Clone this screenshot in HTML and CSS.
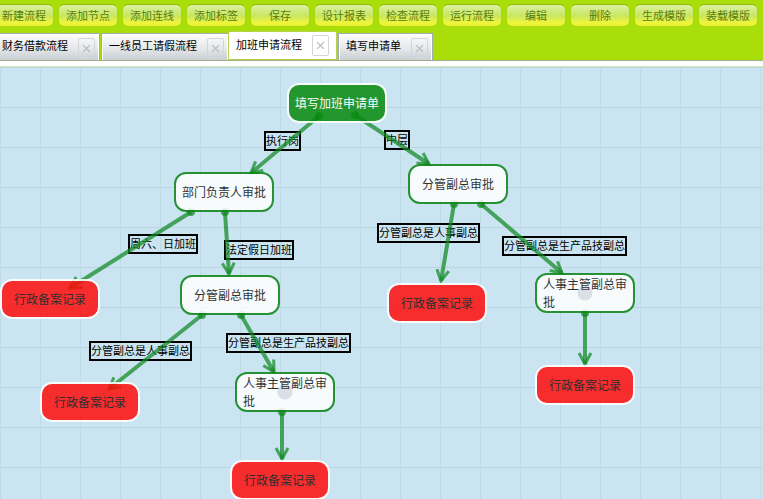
FILE: index.html
```html
<!DOCTYPE html>
<html lang="zh-CN">
<head>
<meta charset="utf-8">
<title>加班申请流程</title>
<link rel="stylesheet" href="styles.css">
</head>
<body>
<header class="top">
  <nav class="toolbar">
    <button class="tool">新建流程</button>
    <button class="tool">添加节点</button>
    <button class="tool">添加连线</button>
    <button class="tool">添加标签</button>
    <button class="tool">保存</button>
    <button class="tool">设计报表</button>
    <button class="tool">检查流程</button>
    <button class="tool">运行流程</button>
    <button class="tool">编辑</button>
    <button class="tool">删除</button>
    <button class="tool">生成模版</button>
    <button class="tool">装载模版</button>
  </nav>
  <div class="tabs">
    <div class="tab"><button class="tab-name">财务借款流程</button><button class="close" aria-label="关闭"><svg viewBox="0 0 8 8"><path d="M1 1l6 6M7 1L1 7"/></svg></button></div>
    <div class="tab"><button class="tab-name">一线员工请假流程</button><button class="close" aria-label="关闭"><svg viewBox="0 0 8 8"><path d="M1 1l6 6M7 1L1 7"/></svg></button></div>
    <div class="tab active"><button class="tab-name">加班申请流程</button><button class="close" aria-label="关闭"><svg viewBox="0 0 8 8"><path d="M1 1l6 6M7 1L1 7"/></svg></button></div>
    <div class="tab"><button class="tab-name">填写申请单</button><button class="close" aria-label="关闭"><svg viewBox="0 0 8 8"><path d="M1 1l6 6M7 1L1 7"/></svg></button></div>
  </div>
</header>
<main class="canvas">
  <div class="label" style="left:264px;top:64px">执行岗</div>
  <div class="label" style="left:384px;top:63px">中层</div>
  <div class="label" style="left:128px;top:167px">周六、日加班</div>
  <div class="label" style="left:224px;top:173px">法定假日加班</div>
  <div class="label" style="left:377px;top:156px">分管副总是人事副总</div>
  <div class="label" style="left:502px;top:169px">分管副总是生产品技副总</div>
  <div class="label" style="left:89px;top:274px">分管副总是人事副总</div>
  <div class="label" style="left:226px;top:266px">分管副总是生产品技副总</div>
  <svg class="edges">
    <defs>
      <marker id="arrow" markerUnits="userSpaceOnUse" markerWidth="20" markerHeight="20" refX="15" refY="10" orient="auto">
        <path d="M4 4L15 10L4 16"/>
      </marker>
      <marker id="dot" markerUnits="userSpaceOnUse" markerWidth="10" markerHeight="10" refX="5" refY="5">
        <circle cx="5" cy="5" r="4"/>
      </marker>
    </defs>
    <path class="edge" d="M319 49L251 106"/>
    <path class="edge" d="M355 48L429 97"/>
    <path class="edge" d="M191 145L70 221"/>
    <path class="edge" d="M225 145L229 207"/>
    <path class="edge" d="M202 248L109 322"/>
    <path class="edge" d="M241 248L274 305"/>
    <path class="edge" d="M282 345L282 392"/>
    <path class="edge" d="M454 137L441 214"/>
    <path class="edge" d="M481 137L562 206"/>
    <path class="edge" d="M585 246L585 297"/>
  </svg>
  <div class="node start" style="left:287px;top:16px">填写加班申请单</div>
  <div class="node" style="left:174px;top:105px">部门负责人审批</div>
  <div class="node" style="left:408px;top:97px">分管副总审批</div>
  <div class="node end" style="left:0px;top:212px">行政备案记录</div>
  <div class="node" style="left:180px;top:208px">分管副总审批</div>
  <div class="node end" style="left:40px;top:315px">行政备案记录</div>
  <div class="node anchor" style="left:235px;top:305px">人事主管副总审批</div>
  <div class="node end" style="left:230px;top:393px">行政备案记录</div>
  <div class="node end" style="left:387px;top:216px">行政备案记录</div>
  <div class="node anchor" style="left:535px;top:206px">人事主管副总审批</div>
  <div class="node end" style="left:535px;top:298px">行政备案记录</div>
</main>
</body>
</html>
```
FILE: styles.css
```css
* {
  box-sizing: border-box;
}

body {
  margin: 0;
  height: 100vh;
  display: flex;
  flex-direction: column;
  overflow: hidden;
  background: #fff;
  color: #000;
  font: 11px/16px "Noto Sans CJK SC", sans-serif;
}

button {
  margin: 0;
  padding: 0;
  border: 0;
  background: none;
  color: inherit;
  font: inherit;
  white-space: nowrap;
}

.top {
  overflow: hidden;
  background: #a9de0b;
}

.toolbar {
  display: flex;
  gap: 4px;
  margin-left: -6px;
  padding: 4px 0;
}

.tool {
  flex: none;
  width: 60px;
  height: 23px;
  padding-bottom: 2px;
  border: 1px solid #a6da0c;
  border-top-color: #8fbd10;
  border-radius: 6px;
  background: linear-gradient(#dcf0a0, #c8e765 50%, #eff53c 85%, #e6f030);
  color: #5d7d0a;
}

.tabs {
  display: flex;
  align-items: flex-end;
  gap: 1px;
  margin-left: -6px;
  border-bottom: 1px solid #9fae86;
}

.tab {
  display: flex;
  align-items: center;
  gap: 10px;
  height: 27px;
  padding: 0 4px 0 7px;
  border: 1px solid #a3abb2;
  border-width: 1px 1px 0;
  background: linear-gradient(#fdfdfd, #e6e8ea 55%, #c9cfd4);
  box-shadow: inset 1px 1px #fff, inset -1px 0 #fff;
}

.tab:not(.active) .close {
  margin-top: 2px;
}

.tab.active {
  height: 29px;
  margin-left: -2px;
  padding-right: 7px;
  border-color: #b3d04e;
  border-bottom: 1px solid #b9cf4a;
  background: #fff;
}

.tab-name {
  padding-bottom: 4px;
}

.close {
  display: grid;
  place-items: center;
  width: 17px;
  height: 21px;
  border: 1px solid #d3d6d9;
  border-radius: 2px;
}

.close svg {
  width: 9px;
  height: 9px;
  stroke: #b4b7ba;
  fill: none;
}

.canvas {
  position: relative;
  flex: 1;
  margin-top: 5px;
  overflow: hidden;
  border-top: 1px solid #d8e6b8;
  background-color: #cae5f1;
  background-image:
    linear-gradient(90deg, #bedae5 1px, transparent 1px),
    linear-gradient(#b9d5df 1px, transparent 1px);
  background-size: 40px 40px;
}

.edges {
  position: absolute;
  inset: 0;
  width: 100%;
  height: 100%;
}

.edge {
  fill: none;
  stroke: #118822;
  stroke-opacity: 0.72;
  stroke-width: 4px;
  marker-start: url(#dot);
  marker-end: url(#arrow);
}

#arrow path {
  fill: none;
  stroke: #118822;
  stroke-opacity: 0.72;
  stroke-width: 3px;
}

#dot circle {
  fill: #118822;
  fill-opacity: 0.72;
  stroke: none;
}

.label {
  position: absolute;
  border: 2px solid #000;
  line-height: 15px;
  padding-bottom: 1px;
  white-space: nowrap;
}

.node {
  position: absolute;
  display: flex;
  align-items: center;
  justify-content: center;
  width: 100px;
  height: 40px;
  padding: 0 6px;
  border: 2px solid #0b8415;
  border-radius: 12px;
  background: #fff;
  color: #111;
  font-size: 12px;
  line-height: 18px;
  opacity: 0.85;
}

.node.start {
  border-color: #fff;
  background: #078a0c;
  color: #fff;
}

.node.end {
  border-color: #fff;
  background: #ff0c0c;
}

.node.anchor {
  background: radial-gradient(circle at 48px 18px, #dde0e3 7px, #fff 8px);
}
```
